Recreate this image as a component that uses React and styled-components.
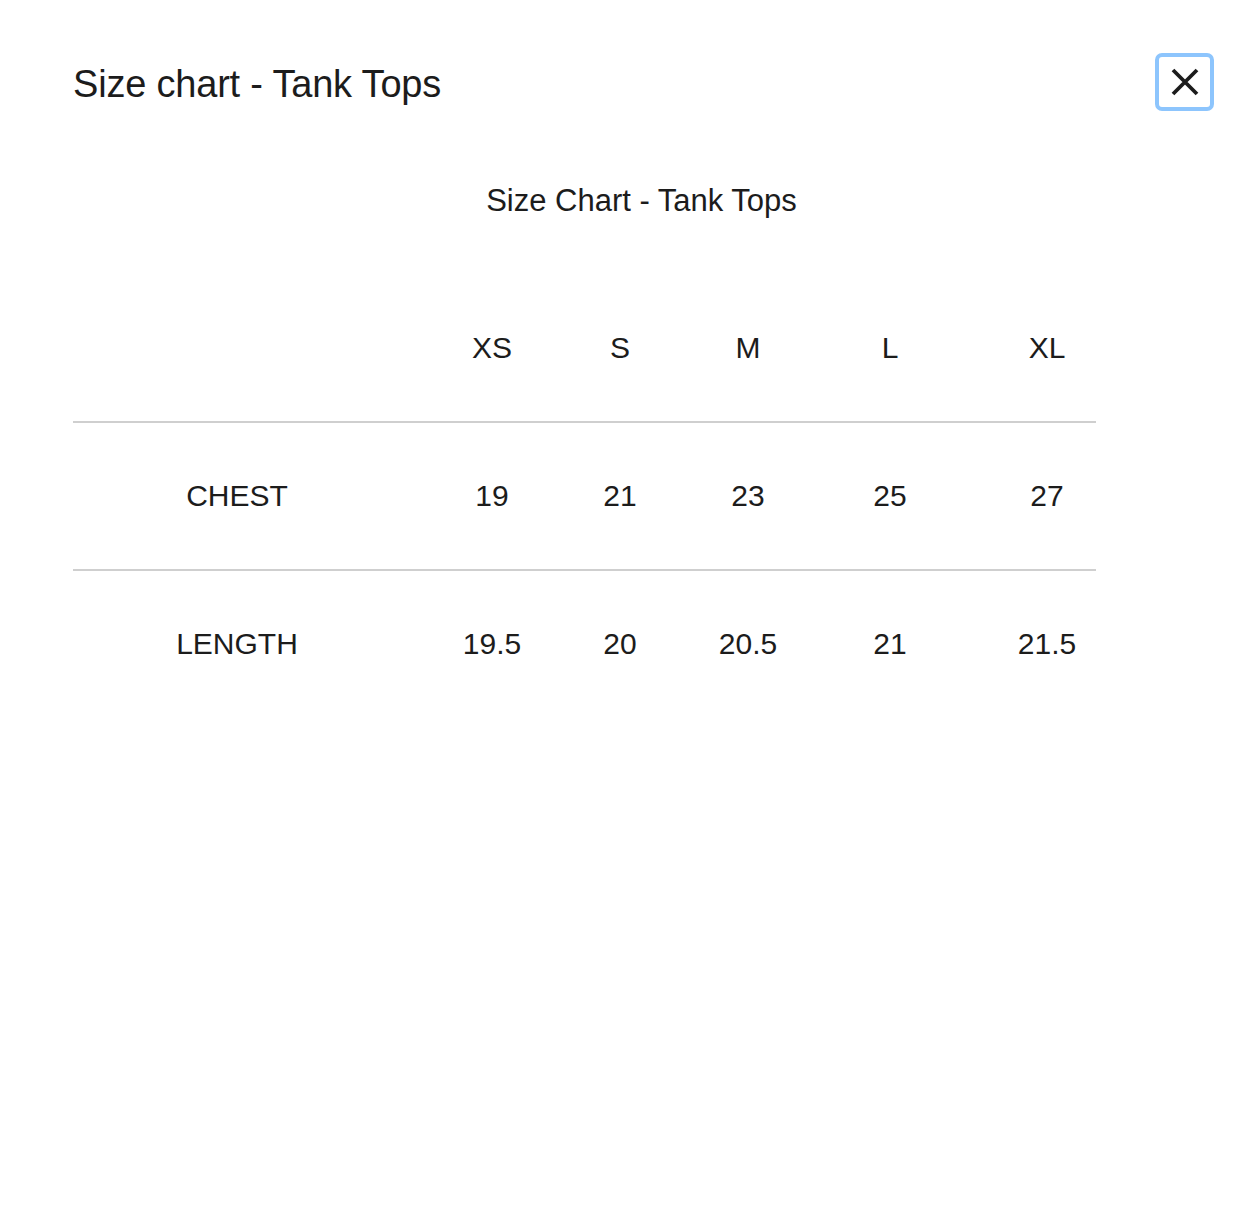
import styled, { createGlobalStyle } from 'styled-components';

const GlobalStyle = createGlobalStyle`
  body {
    margin: 0;
    background: #ffffff;
    font-family: "Liberation Sans", Arial, sans-serif;
    color: #1c1c1c;
  }
`;

const Modal = styled.div`
  padding: 57px 38px 0 73px;
  min-height: 1150px;
  background: #ffffff;
`;

const Header = styled.header`
  display: flex;
  align-items: center;
  justify-content: space-between;
  height: 50px;
`;

const Title = styled.h2`
  margin: 4px 0 0;
  font-size: 38px;
  font-weight: 400;
  line-height: 44px;
  letter-spacing: -0.2px;
  color: #1c1c1c;
`;

const CloseButton = styled.button`
  width: 51px;
  height: 50px;
  padding: 0;
  display: flex;
  align-items: center;
  justify-content: center;
  background: #ffffff;
  border: none;
  border-radius: 3px;
  outline: 4px solid #8dc5fd;
  cursor: pointer;
`;

const ChartTitle = styled.h3`
  margin: 76px 0 0;
  text-align: center;
  font-size: 31px;
  font-weight: 400;
  line-height: 36px;
  color: #1c1c1c;
`;

const Table = styled.div`
  width: 1023px;
  margin-top: 56px;
`;

const Row = styled.div`
  display: grid;
  grid-template-columns: 328px 182px 74px 182px 102px 155px;
  height: 146px;
  align-items: center;
  border-bottom: ${(p) => (p.$last ? 'none' : '2px solid #cfcfcf')};
`;

const Cell = styled.div`
  text-align: center;
  font-size: 30px;
  line-height: 36px;
  color: #1c1c1c;
  padding-left: ${(p) => (p.$shift ? `${p.$shift}px` : '0')};
`;

const sizes = ['XS', 'S', 'M', 'L', 'XL'];

const rows = [
  { label: 'CHEST', values: ['19', '21', '23', '25', '27'] },
  { label: 'LENGTH', values: ['19.5', '20', '20.5', '21', '21.5'] },
];

function CloseIcon() {
  return (
    <svg width="28" height="28" viewBox="0 0 28 28" fill="none">
      <path d="M2 2L26 26M26 2L2 26" stroke="#1c1c1c" strokeWidth="3.8" />
    </svg>
  );
}

function SizeRow({ label, values, last }) {
  return (
    <Row $last={last}>
      <Cell>{label}</Cell>
      {values.map((v, i) => (
        <Cell key={i} $shift={i === values.length - 1 ? 57 : 0}>
          {v}
        </Cell>
      ))}
    </Row>
  );
}

export default function App() {
  return (
    <>
      <GlobalStyle />
      <Modal>
        <Header>
          <Title>Size chart - Tank Tops</Title>
          <CloseButton aria-label="Close">
            <CloseIcon />
          </CloseButton>
        </Header>
        <ChartTitle>Size Chart - Tank Tops</ChartTitle>
        <Table>
          <SizeRow label="" values={sizes} />
          {rows.map((r, i) => (
            <SizeRow key={r.label} label={r.label} values={r.values} last={i === rows.length - 1} />
          ))}
        </Table>
      </Modal>
    </>
  );
}
